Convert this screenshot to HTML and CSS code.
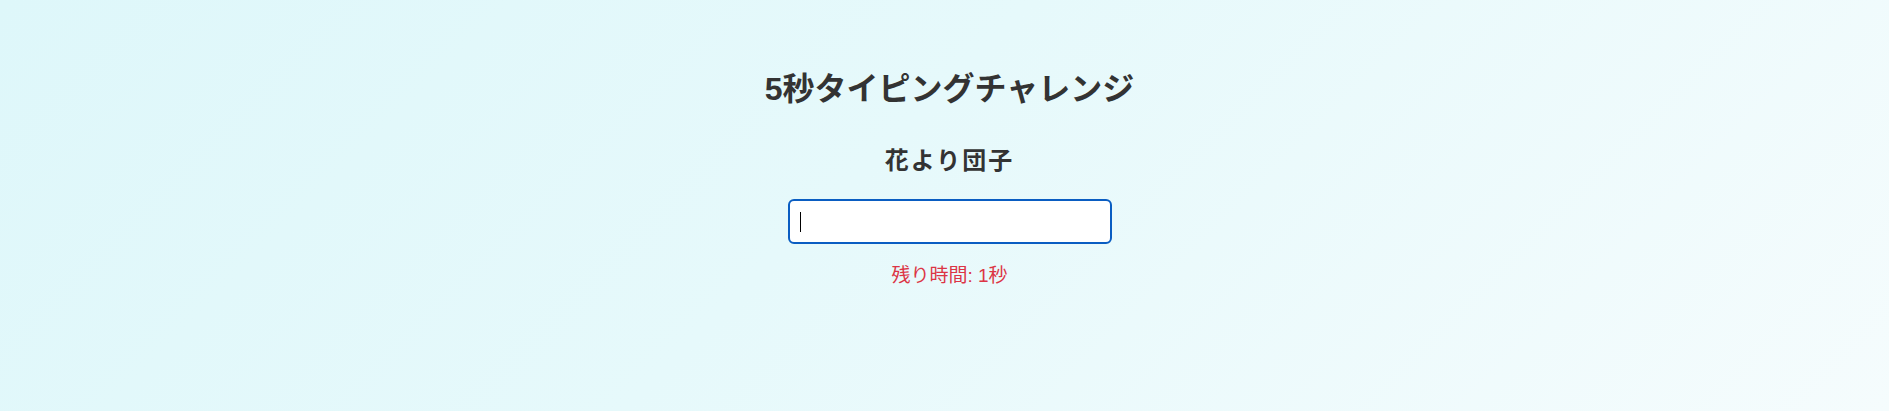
FILE: index.html
```html
<!DOCTYPE html>
<html lang="ja">
<head>
<meta charset="utf-8">
<title>5秒タイピングチャレンジ</title>
<link rel="stylesheet" href="styles.css">
</head>
<body>
<main class="app">
  <h1 class="title">5秒タイピングチャレンジ</h1>
  <p class="phrase">花より団子</p>
  <div class="field">
    <input class="answer" type="text" autofocus>
    <span class="caret"></span>
  </div>
  <p class="timer">残り時間: 1秒</p>
</main>
</body>
</html>
```

FILE: styles.css
```css
html, body {
  margin: 0;
  padding: 0;
}

body {
  min-height: 100vh;
  background: linear-gradient(135deg, #def7fa 0%, #e6f9fb 45%, #f5fcfd 100%);
  font-family: "Liberation Sans", "Noto Sans CJK JP", sans-serif;
  color: #333333;
}

.app {
  display: flex;
  flex-direction: column;
  align-items: center;
  padding: 69px 0 0 10px;
}

.title {
  margin: 0;
  font-size: 32px;
  line-height: 40px;
  font-weight: 700;
}

.phrase {
  margin: 36px 0 0;
  font-size: 24px;
  line-height: 32px;
  font-weight: 700;
  letter-spacing: 2px;
}

.field {
  position: relative;
  margin-top: 22px;
}

.answer {
  display: block;
  box-sizing: border-box;
  width: 324px;
  height: 45px;
  padding: 10px;
  border: 2px solid #0a5dc2;
  border-radius: 6px;
  background: #ffffff;
  font-family: inherit;
  font-size: 18px;
  color: #000;
  outline: none;
  caret-color: transparent;
}

.caret {
  position: absolute;
  left: 12px;
  top: 13px;
  width: 1px;
  height: 20px;
  background: #000;
}

.timer {
  margin: 20px 0 0;
  font-size: 19px;
  line-height: 24px;
  color: #dc3545;
}
```
